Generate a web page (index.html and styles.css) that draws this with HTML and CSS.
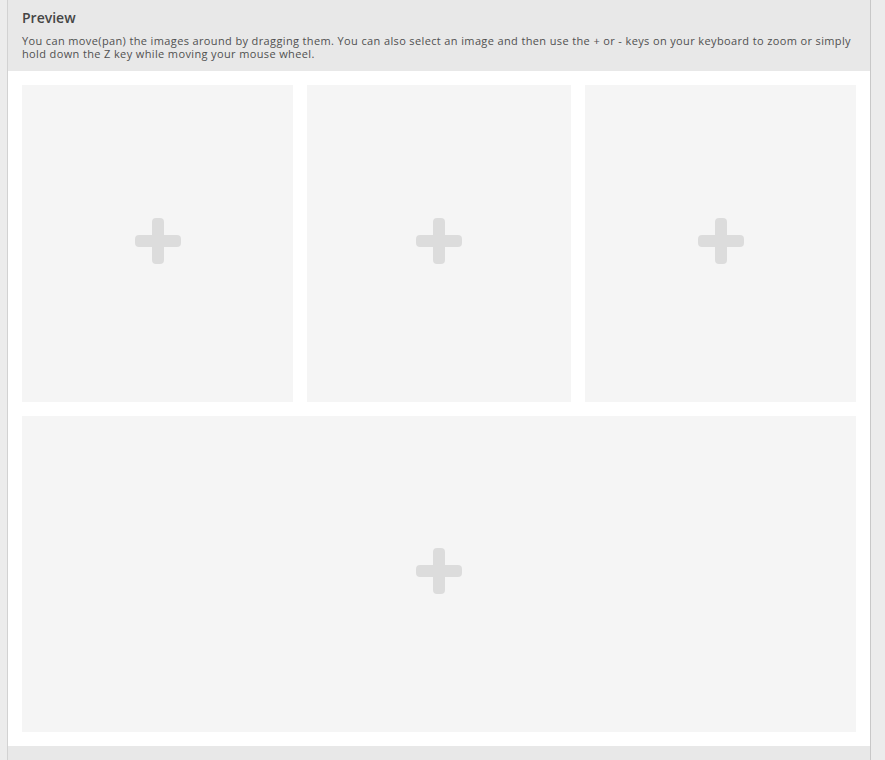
FILE: index.html
```html
<!DOCTYPE html>
<html lang="en">
<head>
<meta charset="utf-8">
<title>Preview</title>
<link rel="stylesheet" href="styles.css">
</head>
<body>
<div class="panel">
  <div class="panel-head">
    <h2 class="panel-title">Preview</h2>
    <p class="panel-desc">You can move(pan) the images around by dragging them. You can also select an image and then use the + or - keys on your keyboard to zoom or simply hold down the Z key while moving your mouse wheel.</p>
  </div>
  <div class="panel-body">
    <div class="grid">
      <div class="slot slot-a"><svg class="plus" viewBox="0 0 46 46"><path d="M17 4a4 4 0 0 1 4-4h4a4 4 0 0 1 4 4v13h13a4 4 0 0 1 4 4v4a4 4 0 0 1-4 4H29v13a4 4 0 0 1-4 4h-4a4 4 0 0 1-4-4V29H4a4 4 0 0 1-4-4v-4a4 4 0 0 1 4-4h13z"/></svg></div>
      <div class="slot slot-b"><svg class="plus" viewBox="0 0 46 46"><path d="M17 4a4 4 0 0 1 4-4h4a4 4 0 0 1 4 4v13h13a4 4 0 0 1 4 4v4a4 4 0 0 1-4 4H29v13a4 4 0 0 1-4 4h-4a4 4 0 0 1-4-4V29H4a4 4 0 0 1-4-4v-4a4 4 0 0 1 4-4h13z"/></svg></div>
      <div class="slot slot-c"><svg class="plus" viewBox="0 0 46 46"><path d="M17 4a4 4 0 0 1 4-4h4a4 4 0 0 1 4 4v13h13a4 4 0 0 1 4 4v4a4 4 0 0 1-4 4H29v13a4 4 0 0 1-4 4h-4a4 4 0 0 1-4-4V29H4a4 4 0 0 1-4-4v-4a4 4 0 0 1 4-4h13z"/></svg></div>
      <div class="slot slot-wide"><svg class="plus" viewBox="0 0 46 46"><path d="M17 4a4 4 0 0 1 4-4h4a4 4 0 0 1 4 4v13h13a4 4 0 0 1 4 4v4a4 4 0 0 1-4 4H29v13a4 4 0 0 1-4 4h-4a4 4 0 0 1-4-4V29H4a4 4 0 0 1-4-4v-4a4 4 0 0 1 4-4h13z"/></svg></div>
    </div>
  </div>
  <div class="panel-foot"></div>
</div>
</body>
</html>
```
FILE: styles.css
```css
html, body {
  margin: 0;
  padding: 0;
}

body {
  background: #ececec;
  font-family: "Open Sans", "Liberation Sans", sans-serif;
  height: 760px;
  overflow: hidden;
}

.panel {
  margin-left: 7px;
  width: 862px;
  border-left: 1px solid #d2d2d2;
  border-right: 1px solid #c8c8c8;
  background: #ffffff;
  min-height: 760px;
  display: flex;
  flex-direction: column;
}

.panel-head {
  background: #e8e8e8;
  height: 71px;
  box-sizing: border-box;
  padding: 8px 14px 0 14px;
}

.panel-title {
  margin: 0;
  font-size: 14px;
  font-weight: 600;
  line-height: 20px;
  color: #454545;
}

.panel-desc {
  margin: 6px 0 0 0;
  font-size: 11px;
  line-height: 13px;
  color: #505050;
  letter-spacing: 0.37px;
}

.panel-body {
  padding: 14px;
}

.grid {
  display: grid;
  grid-template-columns: 271px 264px 271px;
  grid-template-rows: 317px 316px;
  gap: 14px;
}

.slot {
  background: #f5f5f5;
  display: flex;
  align-items: center;
  justify-content: center;
}

.slot-wide {
  grid-column: 1 / 4;
}

/* the add glyph sits slightly above the slot's centre */
.plus {
  width: 46px;
  height: 46px;
  fill: #dcdcdc;
  margin-bottom: 6px;
}

.panel-foot {
  flex: 1;
  background: #e8e8e8;
}
```
